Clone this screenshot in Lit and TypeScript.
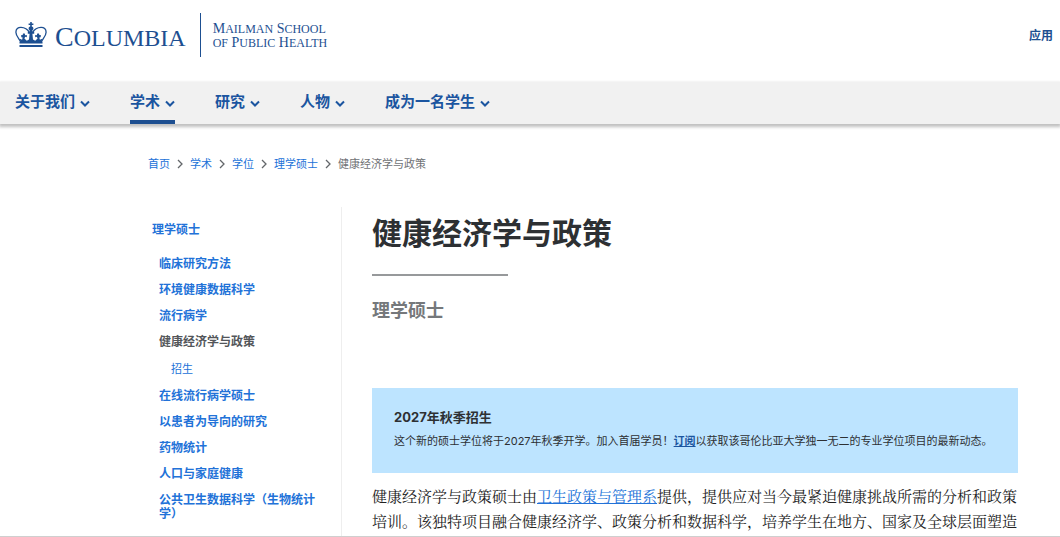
import { LitElement, html, css, svg } from "lit";
import { customElement } from "lit/decorators.js";

const sans = css`"Inter", "Noto Sans CJK SC", sans-serif`;

const navItems = [
  { label: "关于我们", active: false },
  { label: "学术", active: true },
  { label: "研究", active: false },
  { label: "人物", active: false },
  { label: "成为一名学生", active: false },
];

const crumbs = ["首页", "学术", "学位", "理学硕士"];

const programs = [
  { label: "临床研究方法" },
  { label: "环境健康数据科学" },
  { label: "流行病学" },
  { label: "健康经济学与政策", current: true, children: ["招生"] },
  { label: "在线流行病学硕士" },
  { label: "以患者为导向的研究" },
  { label: "药物统计" },
  { label: "人口与家庭健康" },
  { label: "公共卫生数据科学（生物统计学）" },
] as { label: string; current?: boolean; children?: string[] }[];

const crown = svg`
  <path d="M5.6 20 C5.2 17.6 .9 14.6 .9 10.2 C.9 7.2 3 5.2 6 5.3 C9.6 5.4 12.8 7.6 14.4 10.4 M26.4 20 C26.8 17.6 31.1 14.6 31.1 10.2 C31.1 7.2 29 5.2 26 5.3 C22.4 5.4 19.2 7.6 17.6 10.4" fill="none" stroke="currentColor" stroke-width="1.3"/>
  <path d="M15.2 0h1.6v1.6h1.6v1.5h-1.6v1.3c1 .3 1.6 1 1.6 2 0 .8-.4 1.4-1 1.8v1.6h1.8v2h-1.8l.6 5.6 2.2 1.4 2.4-2.4-.8-1.6-1.6.4v-2.2l1.7.2.3-1.8h1.8l.3 1.6 1.7.2-.4 2-1.3.2.6 2.4 2.4-1-1 3.8H5.7l-1-3.8 2.4 1 .6-2.4-1.3-.2-.4-2 1.7-.2.3-1.6h1.8l.3 1.8 1.7-.2v2.2l-1.6-.4-.8 1.6 2.4 2.4 2.2-1.4.6-5.6h-1.8v-2h1.8V8.2c-.6-.4-1-1-1-1.8 0-1 .6-1.7 1.6-2V3.1h-1.6V1.6h1.6z" fill="currentColor"/>
  <path d="M4.5 19.8h23v1.7h-23zM4.5 22.9h23v2.1h-23z" fill="currentColor"/>`;

@customElement("site-header")
class SiteHeader extends LitElement {
  static styles = css`
    :host {
      display: block;
      font-family: ${sans};
      color: #1d4f91;
    }
    a {
      color: inherit;
      text-decoration: none;
    }
    .top {
      display: flex;
      justify-content: space-between;
      padding: 13px 7px 25px 15px;
    }
    .brand {
      display: flex;
      align-items: center;
      height: 44px;
      font-family: "Liberation Serif", serif;
      white-space: nowrap;
    }
    .crown {
      width: 32px;
      height: 25px;
      margin: 0 8px 2px 0;
    }
    .name {
      font-size: 28px;
      line-height: 32px;
      padding-top: 4px;
    }
    .name small {
      font-size: 24px;
    }
    .school {
      box-sizing: border-box;
      height: 44px;
      font-size: 14px;
      line-height: 14px;
      border-left: 1px solid #1d4f91;
      margin-left: 14px;
      padding: 9px 0 0 12px;
    }
    .school small {
      font-size: 12px;
      line-height: 12px;
    }
    .apply {
      font-size: 12px;
      font-weight: 600;
      line-height: 18px;
      padding-top: 14px;
    }
    .bar {
      background: #f1f1f1;
      box-shadow: 0 2px 3px 1px #c0c0c0;
    }
    .menu {
      display: flex;
      gap: 40px;
      list-style: none;
      margin: 0;
      padding: 0 15px;
    }
    .item {
      display: flex;
      align-items: center;
      gap: 5px;
      padding: 0 0 2px;
      height: 42px;
      box-sizing: border-box;
      border: 0 solid transparent;
      border-width: 4px 0;
      background: none;
      color: #1b55a0;
      font: 700 15px/24px ${sans};
      cursor: pointer;
      white-space: nowrap;
    }
    .active {
      border-bottom-color: #1d4f91;
    }
    .chevron {
      width: 10px;
      height: 8px;
      margin-top: 3px;
    }
  `;

  render() {
    return html`
      <header>
        <div class="top">
          <a class="brand" href="#">
            <svg class="crown" viewBox="0 0 32 25" aria-hidden="true">${crown}</svg>
            <span class="name">C<small>OLUMBIA</small></span>
            <span class="school">M<small>AILMAN</small> S<small>CHOOL</small><br /><small>OF</small> P<small>UBLIC</small> H<small>EALTH</small></span>
          </a>
          <a class="apply" href="#">应用</a>
        </div>
        <nav class="bar">
          <ul class="menu">
            ${navItems.map(
              (item) => html`<li>
                <button class="item ${item.active ? "active" : ""}" type="button">
                  ${item.label}
                  <svg class="chevron" viewBox="0 0 10 8" aria-hidden="true">
                    <path d="M1 1.5 5 5.500 9 1.5" fill="none" stroke="currentColor" stroke-width="2" />
                  </svg>
                </button>
              </li>`
            )}
          </ul>
        </nav>
      </header>
    `;
  }
}

@customElement("bread-crumbs")
class BreadCrumbs extends LitElement {
  static styles = css`
    :host {
      display: block;
      font: 400 11px/16px ${sans};
    }
    .list {
      display: flex;
      flex-wrap: wrap;
      list-style: none;
      margin: 0;
      padding: 0;
      color: #707276;
    }
    .crumb {
      display: flex;
      align-items: center;
    }
    .link {
      color: #2272d8;
      text-decoration: none;
    }
    .sep {
      width: 6px;
      height: 10px;
      margin: 0 7px;
      color: #63666a;
    }
  `;

  render() {
    return html`
      <nav aria-label="breadcrumb">
        <ol class="list">
          ${crumbs.map(
            (crumb) => html`<li class="crumb">
              <a class="link" href="#">${crumb}</a>
              <svg class="sep" viewBox="0 0 6 10" aria-hidden="true">
                <path d="M1 1 5 5 1 9" fill="none" stroke="currentColor" stroke-width="1.3" />
              </svg>
            </li>`
          )}
          <li class="crumb" aria-current="page">健康经济学与政策</li>
        </ol>
      </nav>
    `;
  }
}

@customElement("side-menu")
class SideMenu extends LitElement {
  static styles = css`
    :host {
      display: block;
      font: 700 12px/14px ${sans};
      padding: 16px 20px 0 4px;
      border-right: 1px solid #eeeeee;
    }
    a {
      color: #2272d8;
      text-decoration: none;
    }
    .list {
      list-style: none;
      margin: 20px 0 0;
      padding: 0 0 0 7px;
      display: flex;
      flex-direction: column;
      gap: 12px;
    }
    .sub {
      margin: 13px 0 1px;
      padding-left: 12px;
      font-weight: 400;
      font-size: 11px;
    }
    .list .current {
      color: #53565a;
    }
  `;

  render() {
    return html`
      <nav>
        <a href="#">理学硕士</a>
        <ul class="list">
          ${programs.map(
            (p) => html`<li>
              <a class=${p.current ? "current" : ""} href="#">${p.label}</a>
              ${p.children
                ? html`<ul class="list sub">
                    ${p.children.map((c) => html`<li><a href="#">${c}</a></li>`)}
                  </ul>`
                : ""}
            </li>`
          )}
        </ul>
      </nav>
    `;
  }
}

@customElement("app-root")
class AppRoot extends LitElement {
  static styles = css`
    :host {
      display: flex;
      flex-direction: column;
      height: 100vh;
      box-sizing: border-box;
      overflow: hidden;
      background: #ffffff;
      border-bottom: 1px solid #cfcfcf;
      font-family: ${sans};
      color: #2d3033;
    }
    .page {
      flex: 1;
      min-height: 0;
      display: flex;
      flex-direction: column;
      padding: 32px 42px 0 148px;
    }
    .columns {
      flex: 1;
      min-height: 0;
      display: grid;
      grid-template-columns: 194px minmax(0, 1fr);
      gap: 30px;
      padding-top: 35px;
    }
    .title {
      margin: 4px 0 0;
      font-size: 30px;
      font-weight: 700;
      line-height: 44px;
    }
    .rule {
      width: 136px;
      height: 2px;
      margin: 19px 0 0;
      border: 0;
      background: #97999b;
    }
    .degree {
      margin: 21px 0 0;
      font-size: 18px;
      font-weight: 700;
      line-height: 28px;
      color: #75787b;
    }
    .notice {
      margin-top: 63px;
      padding: 19px 16px 24px 22px;
      background: #bde4ff;
    }
    .notice-title {
      margin: 0;
      font-size: 13px;
      font-weight: 700;
      line-height: 20px;
    }
    .notice-text {
      margin: 6px 0 0;
      font-size: 11px;
      line-height: 16px;
    }
    .notice-link {
      color: #1b55a0;
      font-weight: 700;
    }
    .body {
      margin: 10px 0 0;
      font: 400 15px/25px "Noto Serif CJK SC", "Noto Serif SC", "Noto Sans CJK SC", serif;
      color: #222222;
    }
    .body-link {
      color: #2272d8;
    }
  `;

  render() {
    return html`
      <site-header></site-header>
      <main class="page">
        <bread-crumbs></bread-crumbs>
        <div class="columns">
          <side-menu></side-menu>
          <article>
            <h1 class="title">健康经济学与政策</h1>
            <hr class="rule" />
            <h2 class="degree">理学硕士</h2>
            <section class="notice">
              <h3 class="notice-title">2027年秋季招生</h3>
              <p class="notice-text">这个新的硕士学位将于2027年秋季开学。加入首届学员！<a class="notice-link" href="#">订阅</a>以获取该哥伦比亚大学独一无二的专业学位项目的最新动态。</p>
            </section>
            <p class="body">健康经济学与政策硕士由<a class="body-link" href="#">卫生政策与管理系</a>提供，提供应对当今最紧迫健康挑战所需的分析和政策培训。该独特项目融合健康经济学、政策分析和数据科学，培养学生在地方、国家及全球层面塑造</p>
          </article>
        </div>
      </main>
    `;
  }
}
